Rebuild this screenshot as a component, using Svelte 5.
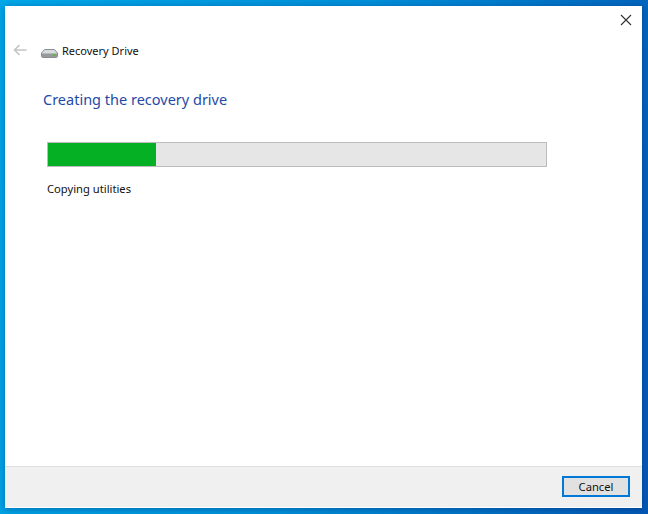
<script>
let progress = 21.6;
</script>

<div class="desktop">
	<div class="window">
		<div class="titlebar">
			<button class="close" aria-label="Close">
				<svg width="12" height="12" viewBox="0 0 12 12"><path d="M1 1 L11 11 M11 1 L1 11" stroke="#333" stroke-width="1.1" fill="none" /></svg>
			</button>
		</div>
		<div class="nav">
			<svg class="back" width="14" height="12" viewBox="0 0 14 12"><path d="M6.5 1 L1.5 6 L6.5 11 M1.5 6 H13.5" stroke="#c4c4c4" stroke-width="1.6" fill="none" /></svg>
			<svg class="drive" width="17" height="9" viewBox="0 0 17 9">
				<path d="M3.5 .5 H13.5 L16.5 4 V7 Q16.5 8.5 15 8.5 H2 Q.5 8.5 .5 7 V4 Z" fill="#d8dbdc" stroke="#8b8e90" />
				<path d="M1 4.5 H16 V7 Q16 8 15 8 H2 Q1 8 1 7 Z" fill="#96999b" />
				<rect x="11.5" y="5" width="3" height="2" fill="#62b34c" />
			</svg>
			<span class="title">Recovery Drive</span>
		</div>
		<div class="content">
			<h1>Creating the recovery drive</h1>
			<div class="bar"><div class="fill" style="width: {progress}%"></div></div>
			<p>Copying utilities</p>
		</div>
		<div class="footer">
			<button class="cancel">Cancel</button>
		</div>
	</div>
</div>

<style>
	:global(body) {
		margin: 0;
	}

	.desktop {
		width: 648px;
		height: 514px;
		box-sizing: border-box;
		padding: 6px 6px 6px 5px;
		background: linear-gradient(100deg, #00a8e8 0%, #0090da 50%, #0458b4 100%);
		font-family: "Noto Sans", "Open Sans", sans-serif;
		overflow: hidden;
	}

	.window {
		height: 100%;
		display: flex;
		flex-direction: column;
		background: #fff;
		box-shadow: 0 1px 7px rgba(0, 30, 90, 0.4);
	}

	.titlebar {
		height: 29px;
		display: flex;
		justify-content: flex-end;
		align-items: flex-end;
		padding-right: 10px;
	}

	.close {
		border: none;
		background: none;
		padding: 0;
		width: 12px;
		height: 12px;
		line-height: 0;
		margin-bottom: 9px;
	}

	.nav {
		height: 30px;
		display: flex;
		align-items: center;
		padding-left: 8px;
	}

	.back {
		margin-right: 14px;
	}

	.drive {
		margin-right: 4px;
		margin-top: 7px;
	}

	.title {
		font-size: 11px;
		color: #111;
	}

	.content {
		flex: 1;
		padding-left: 38px;
	}

	h1 {
		margin: 24px 0 0;
		font-size: 14.5px;
		font-weight: 400;
		line-height: 20px;
		color: #1f4aa8;
	}

	.bar {
		width: 498px;
		height: 23px;
		margin: 33px 0 0 4px;
		background: #e6e6e6;
		border: 1px solid #bcbcbc;
	}

	.fill {
		height: 100%;
		background: #06b025;
	}

	p {
		margin: 14px 0 0 4px;
		font-size: 11.2px;
		line-height: 16px;
		color: #111;
	}

	.footer {
		height: 42px;
		box-sizing: border-box;
		display: flex;
		justify-content: flex-end;
		align-items: flex-start;
		padding: 9px 12px 0 0;
		background: #f0f0f0;
		border-top: 1px solid #dfdfdf;
		border-bottom: 1px solid #fff;
	}

	.cancel {
		width: 68px;
		height: 21px;
		box-sizing: border-box;
		padding: 0;
		font: inherit;
		font-size: 11.2px;
		color: #111;
		background: #e1e1e1;
		border: 2px solid #0078d7;
	}
</style>
